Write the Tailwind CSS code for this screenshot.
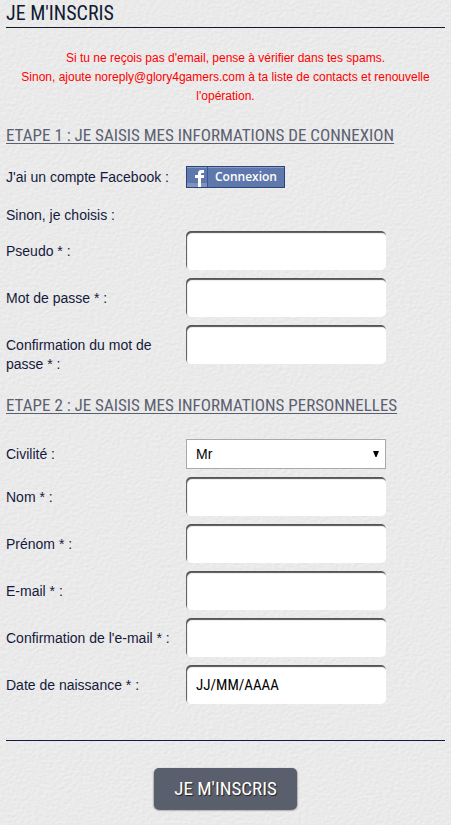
<!DOCTYPE html>
<html lang="fr">
<head>
<meta charset="utf-8">
<meta name="viewport" content="width=device-width, initial-scale=1">
<title>Je m'inscris</title>
<script src="https://cdn.jsdelivr.net/npm/@tailwindcss/browser@4"></script>
</head>
<body class="relative isolate min-h-screen bg-[#e8e8e8] font-['Liberation_Sans',Arial,sans-serif] text-sm text-[#151a3c]">
<!-- Paper grain -->
<svg class="absolute inset-0 -z-10 h-full w-full" aria-hidden="true">
  <filter id="paper" x="0" y="0" width="100%" height="100%" color-interpolation-filters="sRGB">
    <feTurbulence type="fractalNoise" baseFrequency="0.27 0.36" numOctaves="2" seed="4" result="n"/>
    <feDiffuseLighting in="n" lighting-color="#ffffff" surfaceScale="0.11" diffuseConstant="1.07">
      <feDistantLight azimuth="235" elevation="59"/>
    </feDiffuseLighting>
  </filter>
  <rect width="100%" height="100%" filter="url(#paper)"/>
</svg>
<main class="px-[6px] pb-4">
  <h1 class="border-b border-[#151a2e] pt-px pb-[2px] font-['Roboto_Condensed','Liberation_Sans',sans-serif] text-xl leading-6 text-[#111a33]">JE M'INSCRIS</h1>
  <p class="mt-[21px] text-center text-xs leading-[19px] text-[#ff0000]">Si tu ne reçois pas d'email, pense à vérifier dans tes spams.<br>Sinon, ajoute noreply@glory4gamers.com à ta liste de contacts et renouvelle l'opération.</p>
  <form>
    <h2 class="mt-[19px] font-['Roboto_Condensed','Liberation_Sans',sans-serif] text-[17px] leading-5 text-[#5b6070] underline decoration-1 underline-offset-2">ETAPE 1 : JE SAISIS MES INFORMATIONS DE CONNEXION</h2>
    <div class="mt-[21px] flex items-center">
      <span class="w-[180px] shrink-0 leading-[19px]">J'ai un compte Facebook :</span>
      <button type="button" class="flex h-[22px] items-stretch border border-[#29447e] bg-[#5f78ab] text-white shadow-[inset_0_1px_0_#8a9cc2]">
        <svg class="h-5 w-[21px]" viewBox="0 0 21 20" aria-hidden="true"><path d="M0 16h20v4H0z" fill="#8093bd"/><path d="M20 0h1v20h-1z" fill="#3d5890"/><path d="M11 20v-9H8V8h3V6.500C11 4 12.300 3 14.500 3H17v3h-1.500C14.400 6 14 6.400 14 7.300V8h3v3h-3v9z" fill="#fff"/></svg>
        <span class="px-[7px] font-['Open_Sans',sans-serif] text-xs leading-5 font-semibold">Connexion</span>
      </button>
    </div>
    <p class="mt-[18px] leading-[19px]">Sinon, je choisis :</p>
    <div class="mt-[6px] flex flex-col gap-2">
      <div class="flex items-start">
        <label for="pseudo" class="w-[180px] shrink-0 pt-[11px] pr-2 leading-[19px]">Pseudo * :</label>
        <input id="pseudo" type="text" class="h-[39px] w-[200px] min-w-0 rounded-[5px] bg-white px-[10px] shadow-[inset_1px_2px_1px_#555]">
      </div>
      <div class="flex items-start">
        <label for="pass" class="w-[180px] shrink-0 pt-[11px] pr-2 leading-[19px]">Mot de passe * :</label>
        <input id="pass" type="password" class="h-[39px] w-[200px] min-w-0 rounded-[5px] bg-white px-[10px] shadow-[inset_1px_2px_1px_#555]">
      </div>
      <div class="flex items-start">
        <label for="pass2" class="w-[180px] shrink-0 pt-[11px] pr-2 leading-[19px]">Confirmation du mot de passe * :</label>
        <input id="pass2" type="password" class="h-[39px] w-[200px] min-w-0 rounded-[5px] bg-white px-[10px] shadow-[inset_1px_2px_1px_#555]">
      </div>
    </div>
    <h2 class="mt-[21px] font-['Roboto_Condensed','Liberation_Sans',sans-serif] text-[17px] leading-5 text-[#5b6070] underline decoration-1 underline-offset-2">ETAPE 2 : JE SAISIS MES INFORMATIONS PERSONNELLES</h2>
    <div class="mt-6 flex flex-col gap-2">
      <div class="flex items-center">
        <label for="civ" class="w-[180px] shrink-0 pr-2 leading-[19px]">Civilité :</label>
        <div class="relative w-[200px]">
          <select id="civ" class="block h-[30px] w-full appearance-none border border-[#a9a9a9] bg-white pl-[9px] text-black"><option>Mr</option><option>Mme</option></select>
          <svg class="pointer-events-none absolute top-3 right-[7px] h-[6px] w-[6px]" viewBox="0 0 6 6" aria-hidden="true"><path d="M0 0h6L3.500 6h-1z"/></svg>
        </div>
      </div>
      <div class="flex items-start">
        <label for="nom" class="w-[180px] shrink-0 pt-[11px] pr-2 leading-[19px]">Nom * :</label>
        <input id="nom" type="text" class="h-[39px] w-[200px] min-w-0 rounded-[5px] bg-white px-[10px] shadow-[inset_1px_2px_1px_#555]">
      </div>
      <div class="flex items-start">
        <label for="prenom" class="w-[180px] shrink-0 pt-[11px] pr-2 leading-[19px]">Prénom * :</label>
        <input id="prenom" type="text" class="h-[39px] w-[200px] min-w-0 rounded-[5px] bg-white px-[10px] shadow-[inset_1px_2px_1px_#555]">
      </div>
      <div class="flex items-start">
        <label for="email" class="w-[180px] shrink-0 pt-[11px] pr-2 leading-[19px]">E-mail * :</label>
        <input id="email" type="email" class="h-[39px] w-[200px] min-w-0 rounded-[5px] bg-white px-[10px] shadow-[inset_1px_2px_1px_#555]">
      </div>
      <div class="flex items-start">
        <label for="email2" class="w-[180px] shrink-0 pt-[11px] pr-2 leading-[19px]">Confirmation de l'e-mail * :</label>
        <input id="email2" type="email" class="h-[39px] w-[200px] min-w-0 rounded-[5px] bg-white px-[10px] shadow-[inset_1px_2px_1px_#555]">
      </div>
      <div class="flex items-start">
        <label for="date" class="w-[180px] shrink-0 pt-[11px] pr-2 leading-[19px]">Date de naissance * :</label>
        <input id="date" type="text" value="JJ/MM/AAAA" class="h-[39px] w-[200px] min-w-0 rounded-[5px] bg-white px-[10px] font-['Roboto_Condensed','Liberation_Sans',sans-serif] text-[15px] text-black shadow-[inset_1px_2px_1px_#555]">
      </div>
    </div>
    <div class="mt-9 border-t border-[#0f1d45] pt-[27px] text-center">
      <button type="submit" class="h-[41px] rounded-[5px] bg-[#5a5f6d] px-5 font-['Roboto_Condensed','Liberation_Sans',sans-serif] text-[19px] text-white shadow-[0_1px_2px_#333] [text-shadow:1px_1px_1px_#222]">JE M'INSCRIS</button>
    </div>
  </form>
</main>
</body>
</html>
